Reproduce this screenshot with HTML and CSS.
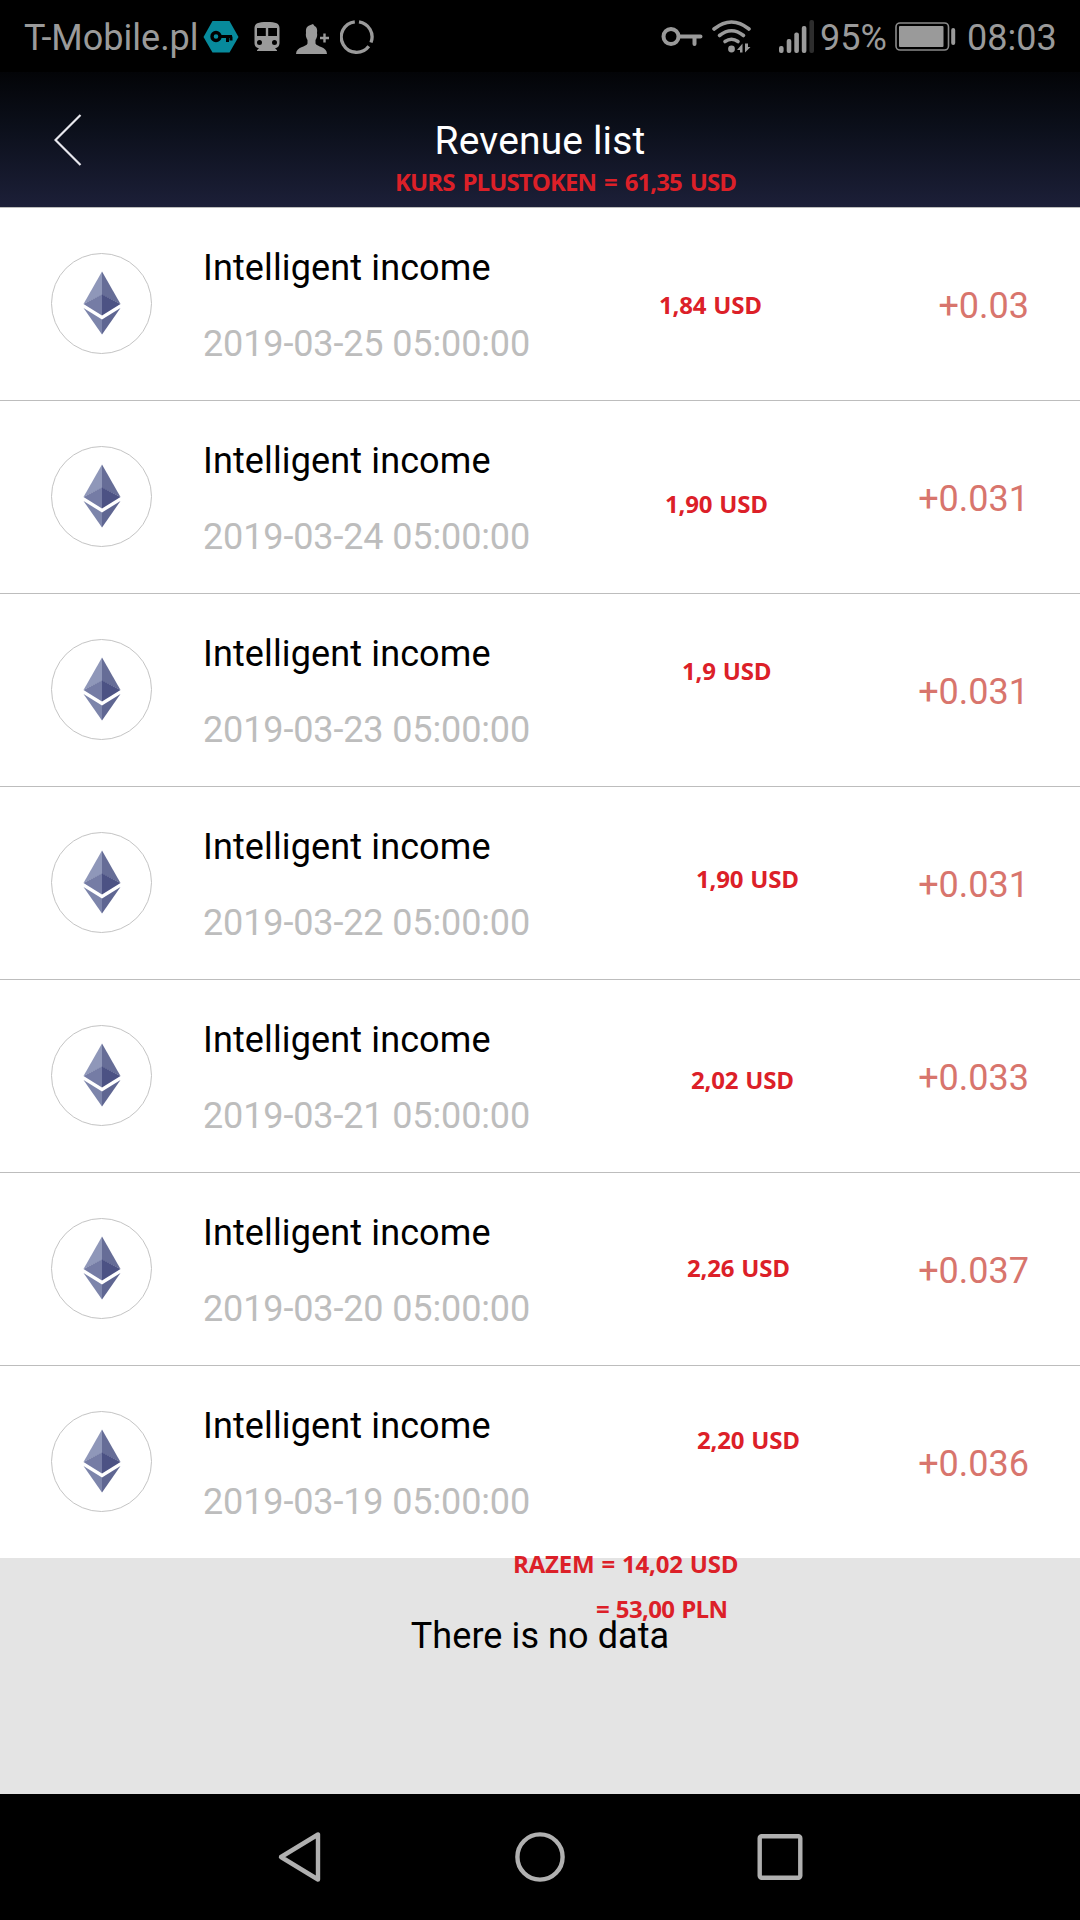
FILE: index.html
```html
<!DOCTYPE html>
<html lang="en">
<head>
  <meta charset="UTF-8">
  <title>Revenue list</title>
  <link rel="stylesheet" href="styles.css">
</head>
<body>

<!-- shared ethereum logo -->
<svg class="defs" width="0" height="0">
  <symbol id="eth" viewBox="0 0 38 64">
    <path d="M19 0.500L0.500 33L19 24Z" fill="#8f97b9"/>
    <path d="M19 0.500L37.500 33L19 24Z" fill="#666d97"/>
    <path d="M19 23.500L0.500 33L19 44.500Z" fill="#757ca5"/>
    <path d="M19 23.500L37.500 33L19 44.500Z" fill="#4c5284"/>
    <path d="M0.500 37L19 48.500V63.500Z" fill="#7d85ab"/>
    <path d="M37.500 37L19 48.500V63.500Z" fill="#5f6692"/>
  </symbol>
</svg>

<div class="status-bar">
  <span class="carrier">T-Mobile.pl</span>
  <svg class="icon-vpn" width="36" height="34" viewBox="0 0 36 34">
    <path d="M9.500 1H26.500L35.500 17L26.500 32.500H9.500L0.500 17Z" fill="#078a9c"/>
    <circle cx="13" cy="16.500" r="4" fill="none" stroke="#000" stroke-width="3.400"/>
    <path d="M17 16.500H29M24.500 16.500V22M28 16.500V20.500" fill="none" stroke="#000" stroke-width="3"/>
  </svg>
  <svg class="icon-train" width="26" height="30" viewBox="0 0 26 30">
    <path fill-rule="evenodd" fill="#9a9a9a" d="M13 0C4 0 0.500 1.500 0.500 6V21C0.500 24 2.500 26 5 26L3 28.300V29H23V28.300L21 26C23.500 26 25.500 24 25.500 21V6C25.500 1.500 22 0 13 0ZM3 6H11.800V14H3ZM14.200 6H23V14H14.200ZM5.500 18A2.500 2.500 0 1 1 5.500 23A2.500 2.500 0 1 1 5.500 18ZM20.500 18A2.500 2.500 0 1 1 20.500 23A2.500 2.500 0 1 1 20.500 18Z"/>
  </svg>
  <svg class="icon-person" width="34" height="32" viewBox="0 0 34 32">
    <path fill="#9a9a9a" d="M10 10C9.500 5 11 3 14.500 2L17 1L18.500 3C21 4 21.500 7 21 10C21.500 12 21 15 19.500 17V20.500C21 24 31 23.500 31 31H0C0 23.500 10.500 24 11.500 20.500V17C10 15 9.500 12 10 10Z"/>
    <path d="M24 15H33M28.500 10.500V19.500" stroke="#9a9a9a" stroke-width="2.400"/>
  </svg>
  <svg class="icon-ring" width="34" height="34" viewBox="0 0 34 34">
    <g fill="none" stroke="#9a9a9a" stroke-width="3.300">
      <path d="M19 1.800A15.300 15.300 0 0 1 31 22.500"/>
      <path d="M28.800 26.200A15.300 15.300 0 1 1 14.800 1.800"/>
    </g>
  </svg>
  <span class="spacer"></span>
  <svg class="icon-key" width="42" height="20" viewBox="0 0 42 20">
    <circle cx="10" cy="9.500" r="7.500" fill="none" stroke="#9a9a9a" stroke-width="4"/>
    <path d="M18 9.500H39.500M33.500 10V17" fill="none" stroke="#9a9a9a" stroke-width="4" stroke-linecap="round"/>
  </svg>
  <svg class="icon-wifi" width="40" height="34" viewBox="0 0 40 34">
    <g fill="none" stroke="#9a9a9a" stroke-width="3.600" stroke-linecap="round">
      <path d="M2 9Q19.500 -5 37 9"/>
      <path d="M7.500 15.500Q19.500 6 31.500 15.500"/>
      <path d="M13 21.500Q19.500 17 26 21.500"/>
    </g>
    <circle cx="19.500" cy="29" r="3.400" fill="#9a9a9a"/>
    <path d="M25 30L30.500 23.500V32.500H28V30ZM33 23.500V32.500L38.500 27H36V23.500Z" fill="#9a9a9a"/>
  </svg>
  <svg class="icon-signal" width="36" height="34" viewBox="0 0 36 34">
    <g fill="#9a9a9a">
      <rect x="0" y="26" width="4.600" height="7" rx="2"/>
      <rect x="7.700" y="19" width="4.600" height="14" rx="2"/>
      <rect x="15.300" y="12.500" width="4.600" height="20.500" rx="2"/>
      <rect x="22.800" y="6" width="4.600" height="27" rx="2"/>
    </g>
    <rect x="30.400" y="0" width="4.600" height="33" rx="2" fill="#2d2d2d"/>
  </svg>
  <span class="battery-level">95%</span>
  <svg class="icon-battery" width="62" height="30" viewBox="0 0 62 30">
    <rect x="1" y="1" width="52.500" height="27" rx="4" fill="none" stroke="#8a8a8a" stroke-width="1.600"/>
    <rect x="4" y="4" width="44.500" height="21" rx="1" fill="#9a9a9a"/>
    <rect x="56.200" y="6" width="4" height="17" rx="2" fill="#9a9a9a"/>
  </svg>
  <span class="clock">08:03</span>
</div>

<div class="header">
  <svg class="back" width="28" height="52" viewBox="0 0 28 52">
    <path d="M26.500 1L1.500 26L26.500 51" fill="none" stroke="#e8e8ee" stroke-width="2.200"/>
  </svg>
  <h1>Revenue list</h1>
  <span class="note note-rate">KURS PLUSTOKEN = 61,35 USD</span>
</div>

<div class="list">
  <div class="row">
    <div class="coin"><svg width="38" height="64"><use href="#eth"/></svg></div>
    <div class="info"><p class="name">Intelligent income</p><p class="date">2019-03-25 05:00:00</p></div>
    <span class="amount">+0.03</span>
    <span class="note note-1">1,84 USD</span>
  </div>
  <div class="row">
    <div class="coin"><svg width="38" height="64"><use href="#eth"/></svg></div>
    <div class="info"><p class="name">Intelligent income</p><p class="date">2019-03-24 05:00:00</p></div>
    <span class="amount">+0.031</span>
    <span class="note note-2">1,90 USD</span>
  </div>
  <div class="row">
    <div class="coin"><svg width="38" height="64"><use href="#eth"/></svg></div>
    <div class="info"><p class="name">Intelligent income</p><p class="date">2019-03-23 05:00:00</p></div>
    <span class="amount">+0.031</span>
    <span class="note note-3">1,9 USD</span>
  </div>
  <div class="row">
    <div class="coin"><svg width="38" height="64"><use href="#eth"/></svg></div>
    <div class="info"><p class="name">Intelligent income</p><p class="date">2019-03-22 05:00:00</p></div>
    <span class="amount">+0.031</span>
    <span class="note note-4">1,90 USD</span>
  </div>
  <div class="row">
    <div class="coin"><svg width="38" height="64"><use href="#eth"/></svg></div>
    <div class="info"><p class="name">Intelligent income</p><p class="date">2019-03-21 05:00:00</p></div>
    <span class="amount">+0.033</span>
    <span class="note note-5">2,02 USD</span>
  </div>
  <div class="row">
    <div class="coin"><svg width="38" height="64"><use href="#eth"/></svg></div>
    <div class="info"><p class="name">Intelligent income</p><p class="date">2019-03-20 05:00:00</p></div>
    <span class="amount">+0.037</span>
    <span class="note note-6">2,26 USD</span>
  </div>
  <div class="row">
    <div class="coin"><svg width="38" height="64"><use href="#eth"/></svg></div>
    <div class="info"><p class="name">Intelligent income</p><p class="date">2019-03-19 05:00:00</p></div>
    <span class="amount">+0.036</span>
    <span class="note note-7">2,20 USD</span>
  </div>
</div>

<div class="footer">
  <p>There is no data</p>
  <span class="note note-total">RAZEM = 14,02 USD</span>
  <span class="note note-pln">= 53,00 PLN</span>
</div>

<div class="nav-bar">
  <svg width="50" height="52" viewBox="0 0 50 52">
    <path d="M43 3.500V48.500L6 26Z" fill="none" stroke="#b0b0b0" stroke-width="4.400" stroke-linejoin="round"/>
  </svg>
  <svg width="50" height="52" viewBox="0 0 50 52">
    <circle cx="25" cy="26" r="22.600" fill="none" stroke="#b0b0b0" stroke-width="4.400"/>
  </svg>
  <svg width="50" height="52" viewBox="0 0 50 52">
    <rect x="4.700" y="5.300" width="40.600" height="41.400" rx="2" fill="none" stroke="#b0b0b0" stroke-width="4.400"/>
  </svg>
</div>

</body>
</html>
```
FILE: styles.css
```css
* {
  box-sizing: border-box;
}

body {
  margin: 0;
  width: 1080px;
  height: 1920px;
  display: flex;
  flex-direction: column;
  overflow: hidden;
  background: #000;
  font-family: Roboto, sans-serif;
  font-size: 36px;
  color: #000;
}

p, h1 {
  margin: 0;
}

svg {
  display: block;
  flex: none;
}

.defs {
  display: none;
}

/* android status bar */
.status-bar {
  height: 72px;
  padding: 2px 24px 0;
  display: flex;
  align-items: center;
  background: #000;
  color: #9a9a9a;
}

.carrier, .battery-level, .clock {
  line-height: 42px;
  padding-top: 2px;
  white-space: nowrap;
}

.carrier {
  width: 179px;
}

.icon-train {
  margin-left: 15px;
}

.icon-person {
  margin-left: 16px;
  margin-top: 4px;
}

.icon-ring {
  margin-left: 10px;
}

.spacer {
  flex: 1;
}

.icon-wifi {
  margin-left: 9px;
}

.icon-signal {
  margin-left: 27px;
}

.battery-level {
  width: 75px;
  margin-left: 5px;
}

.icon-battery {
  margin-right: 10px;
}

.clock {
  width: 89px;
}

.header {
  position: relative;
  height: 135px;
  padding-left: 54px;
  display: flex;
  align-items: center;
  background: linear-gradient(#030407, #0b0f1a 40%, #1c1f38);
}

h1 {
  flex: 1;
  margin-right: 82px;
  padding-top: 3px;
  text-align: center;
  font-size: 39px;
  font-weight: 400;
  line-height: 46px;
  letter-spacing: 0.15px;
  color: #fff;
}

.row {
  position: relative;
  height: 193px;
  padding: 0 51px 2px;
  display: flex;
  align-items: center;
  background: #fff;
  border-top: 1px solid #bdbdbd;
}

.coin {
  width: 101px;
  height: 101px;
  border: 1px solid #c4c4c4;
  border-radius: 50%;
  display: flex;
  align-items: center;
  justify-content: center;
}

.info {
  flex: 1;
  margin-left: 51px;
  padding-top: 6px;
}

.name, .date {
  line-height: 76px;
}

.name {
  letter-spacing: 0.13px;
}

.date {
  letter-spacing: -0.13px;
  color: #bdbdbd;
}

.amount {
  padding-top: 6px;
  color: #d8756d;
}

/* red remarks placed over the screen */
.note {
  position: absolute;
  font-family: "Open Sans", sans-serif;
  font-size: 24px;
  font-weight: 700;
  line-height: 30px;
  letter-spacing: -0.2px;
  word-spacing: 1px;
  white-space: nowrap;
  color: #dc2028;
}

.note-rate { left: 395px; top: 95px; letter-spacing: -0.9px; word-spacing: 2.500px; }
.note-1 { left: 659px; top: 82px; }
.note-2 { left: 665px; top: 88px; }
.note-3 { left: 682px; top: 62px; }
.note-4 { left: 696px; top: 77px; }
.note-5 { left: 691px; top: 85px; }
.note-6 { left: 687px; top: 80px; }
.note-7 { left: 697px; top: 59px; }
.note-total { left: 513px; top: -9px; }
.note-pln { left: 596px; top: 36px; letter-spacing: -0.6px; }

.footer {
  position: relative;
  flex: 1;
  padding-top: 57px;
  background: #e4e4e4;
  text-align: center;
  line-height: 42px;
  letter-spacing: 0.08px;
}

.nav-bar {
  height: 126px;
  padding: 0 275px;
  display: flex;
  align-items: center;
  justify-content: space-between;
  background: #000;
}
```
